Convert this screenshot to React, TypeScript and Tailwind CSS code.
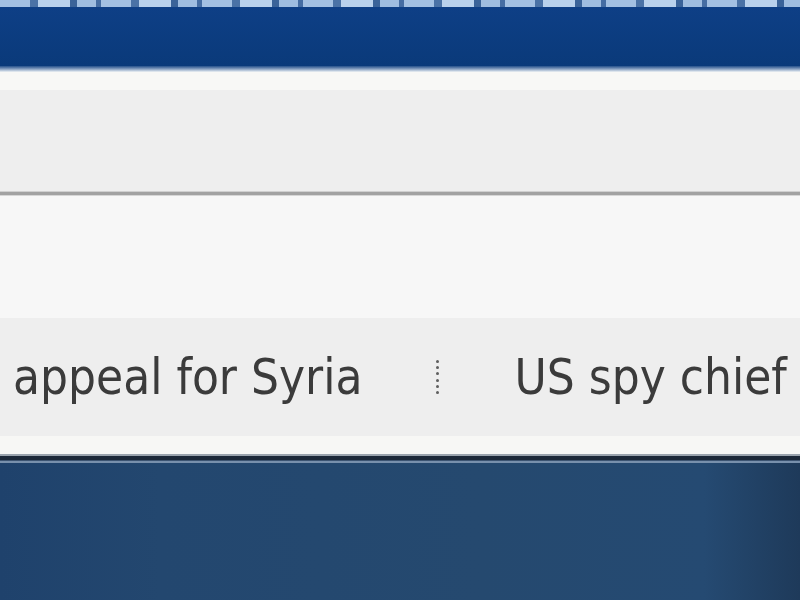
export default function App() {
  return (
    <div className="flex h-[600px] w-[800px] flex-col overflow-hidden bg-[#f7f7f7]">
      {/* top stripe: cut-off strip of the nav above */}
      <div className="h-[7px] bg-[#2f5a92] bg-[repeating-linear-gradient(90deg,#a3c0e2_0px,#a3c0e2_30px,#4a72a6_30px,#4a72a6_38px,#b9d1ec_38px,#b9d1ec_70px,#3a6399_70px,#3a6399_77px,#9fbde0_77px,#9fbde0_96px,#456da3_96px,#456da3_101px)]" />
      <div className="h-[59px] bg-gradient-to-b from-[#0e3f86] to-[#0a3a7a]" />
      <div className="h-[6px] bg-gradient-to-b from-[#24508a] to-[#eef2f5]" />
      <div className="h-[18px] bg-[#f8f8f6]" />
      <div className="h-[101px] bg-[#eeeeee]" />
      <div className="h-[1px] bg-[#d0d0d0]" />
      <div className="h-[3px] bg-[#a2a2a2]" />
      <div className="h-[1px] bg-[#d6d6d6]" />
      <div className="h-[122px] bg-[#f7f7f7]" />

      {/* ticker row */}
      <div className="flex h-[118px] items-center overflow-hidden whitespace-nowrap bg-[#eeeeee] pl-[13px] font-['DejaVu_Sans_Condensed','DejaVu_Sans',sans-serif] text-[49px] leading-none text-[#3b3b3b]">
        <span>appeal for Syria</span>
        <span className="ml-[74px] mr-[75px] flex h-[34px] flex-col justify-between">
          {[0, 1, 2, 3, 4, 5].map((i) => (
            <span key={i} className="block h-[3px] w-[3px] rounded-full bg-[#5e5e5e]" />
          ))}
        </span>
        <span>US spy chief says</span>
      </div>

      <div className="h-[18px] bg-[#f7f7f5]" />
      <div className="h-[2px] bg-[#9aa3ad]" />
      <div className="h-[4px] bg-[#1c2838]" />
      <div className="h-[1px] bg-[#3c5472]" />
      <div className="h-[2px] bg-[#7890ac]" />
      <div className="flex-1 bg-[linear-gradient(90deg,#1f426c_0%,#23476f_20%,#25496f_60%,#254a72_88%,#1e3a5a_100%)]" />
    </div>
  );
}
